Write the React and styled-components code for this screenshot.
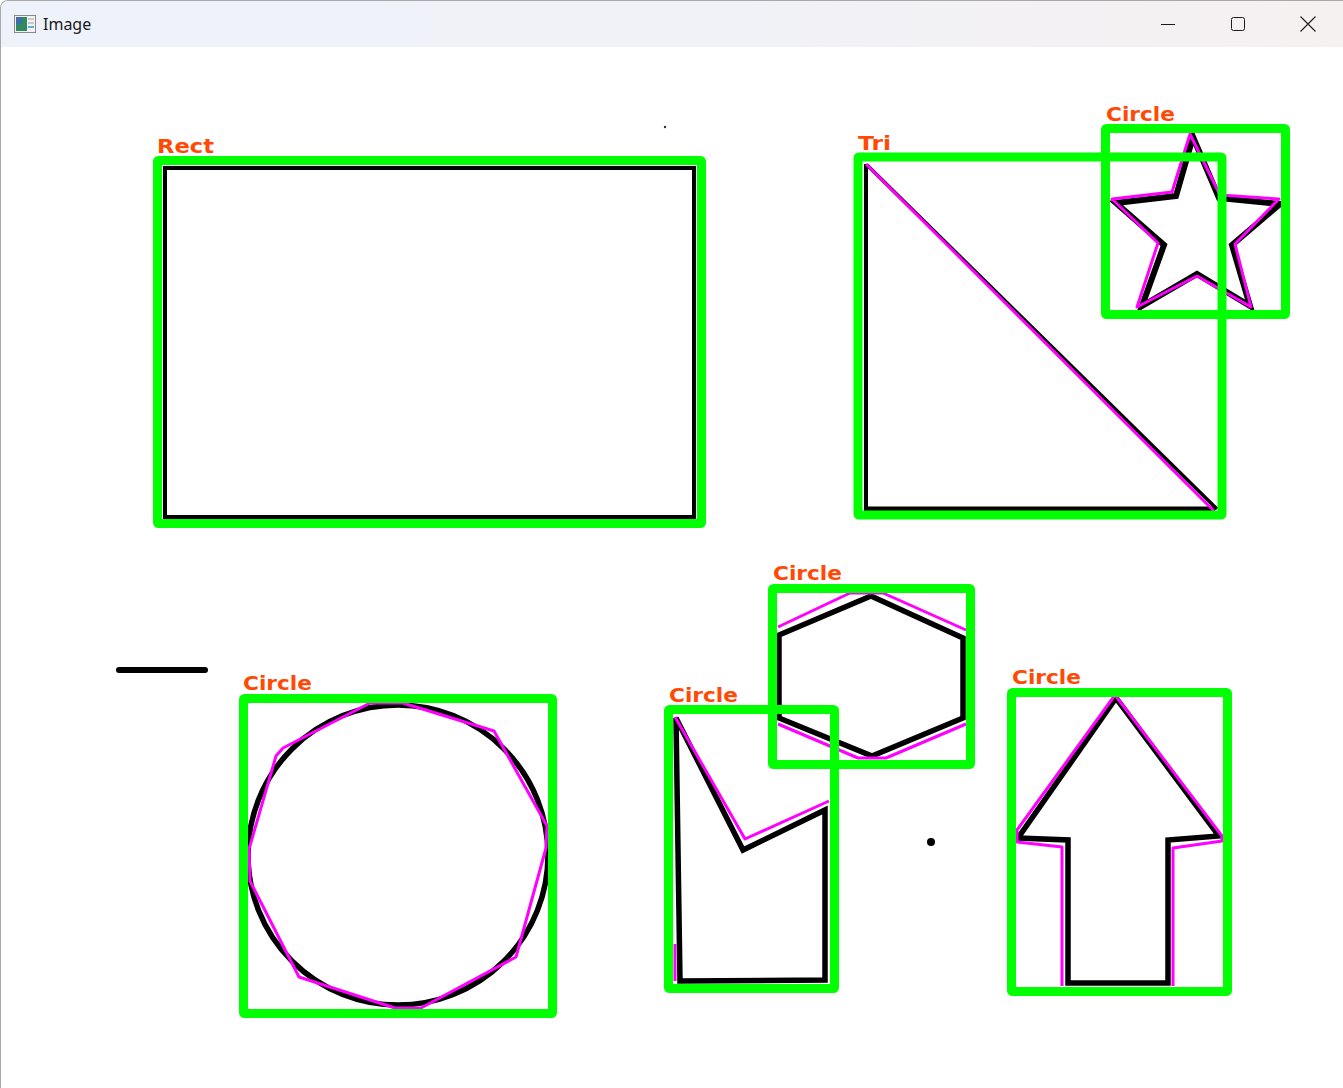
import React from 'react'
import styled, { createGlobalStyle } from 'styled-components'

const GlobalStyle = createGlobalStyle`
  html, body {
    margin: 0;
    padding: 0;
    background: #ffffff;
    overflow: hidden;
  }
`

const Window = styled.div`
  width: 1343px;
  height: 1088px;
  box-sizing: border-box;
  border-top: 1px solid #a9a9ab;
  border-left: 1px solid #a9a9ab;
  border-top-left-radius: 8px;
  display: flex;
  flex-direction: column;
  overflow: hidden;
  background: #ffffff;
`

const TitleBar = styled.div`
  height: 46px;
  flex-shrink: 0;
  display: flex;
  align-items: center;
  padding-left: 13px;
  background: linear-gradient(90deg, #eef2fa 0%, #f1f2f7 55%, #f6f1f1 100%);
`

const Title = styled.span`
  margin-left: 7px;
  font-family: 'Noto Sans', 'Open Sans', sans-serif;
  font-size: 16px;
  color: #1a1a1a;
  line-height: 1;
  padding-bottom: 1px;
`

const Controls = styled.div`
  margin-left: auto;
  display: flex;
  height: 100%;
`

const ControlButton = styled.div`
  width: 70px;
  height: 100%;
  display: flex;
  align-items: center;
  justify-content: center;
  color: #1c1c1c;
`

const Canvas = styled.div`
  flex: 1;
  background: #ffffff;
  display: flex;
`

const Label = styled.text`
  font-family: 'DejaVu Sans', sans-serif;
  font-weight: 700;
  font-size: 19px;
  fill: #ff4a05;
`

const GREEN = '#00ff00'
const MAGENTA = '#ff00ff'

const boxes = [
  { x1: 157.5, y1: 160.5, x2: 701.5, y2: 523.5, label: 'Rect', lx: 157, ly: 153, lw: 57 },
  { x1: 858, y1: 157, x2: 1222, y2: 515, label: 'Tri', lx: 858, ly: 150, lw: 33 },
  { x1: 1105.5, y1: 128.5, x2: 1285.5, y2: 314.5, label: 'Circle', lx: 1106, ly: 121, lw: 69 },
  { x1: 243.5, y1: 698.5, x2: 552.5, y2: 1013.5, label: 'Circle', lx: 243, ly: 690, lw: 69 },
  { x1: 772.5, y1: 588.5, x2: 970.5, y2: 764.5, label: 'Circle', lx: 773, ly: 580, lw: 69 },
  { x1: 668.5, y1: 709.5, x2: 834.5, y2: 988.5, label: 'Circle', lx: 669, ly: 702, lw: 69 },
  { x1: 1011.5, y1: 692.5, x2: 1227.5, y2: 991.5, label: 'Circle', lx: 1012, ly: 684, lw: 69 }
]

const pts = (list) => list.map((p) => p.join(',')).join(' ')

function MinimizeIcon() {
  return (
    <svg width="14" height="14" viewBox="0 0 14 14">
      <line x1="0" y1="7.5" x2="14" y2="7.5" stroke="currentColor" strokeWidth="1" />
    </svg>
  )
}

function MaximizeIcon() {
  return (
    <svg width="14" height="14" viewBox="0 0 14 14">
      <rect x="0.5" y="0.5" width="13" height="13" rx="2" fill="none" stroke="currentColor" strokeWidth="1" />
    </svg>
  )
}

function CloseIcon() {
  return (
    <svg width="16" height="16" viewBox="0 0 16 16">
      <path d="M0.5 0.5 L15.5 15.5 M15.5 0.5 L0.5 15.5" stroke="currentColor" strokeWidth="1.1" />
    </svg>
  )
}

function AppIcon() {
  return (
    <svg width="22" height="18" viewBox="0 0 22 18">
      <rect x="0.5" y="0.5" width="21" height="17" fill="#f2f2f2" stroke="#8a8a8a" />
      <rect x="2" y="2" width="11" height="14" fill="#2f8a5f" />
      <rect x="2" y="2" width="6" height="7" fill="#3c6fa8" />
      <rect x="14" y="3" width="6" height="2" fill="#c9c9c9" />
      <rect x="14" y="7" width="6" height="2" fill="#c9c9c9" />
      <rect x="14" y="11" width="6" height="2" fill="#5fb0d8" />
    </svg>
  )
}

function Drawing() {
  return (
    <svg width="1342" height="1041" viewBox="1 47 1342 1041">
      {/* black source shapes */}
      <g fill="none" stroke="#000" strokeLinejoin="miter">
        <rect x="165" y="168" width="529" height="349" strokeWidth="4" />
        <line x1="165" y1="517.5" x2="694" y2="517.5" strokeWidth="5" />
        <polyline points={pts([[866, 164], [866, 509], [1215, 509]])} strokeWidth="4" />
        <line x1="866" y1="509" x2="1215" y2="509" strokeWidth="5" />
        <line x1="867" y1="165" x2="1217" y2="509" strokeWidth="3.5" />
        <polygon
          points={pts([[1193, 137], [1176, 196], [1116, 203], [1164, 245], [1142, 306], [1197, 274], [1250, 306], [1232, 245], [1280, 204], [1219, 198]])}
          strokeWidth="6"
        />
        <circle cx="398" cy="855" r="150" strokeWidth="5.5" />
        <polygon
          points={pts([[871, 596], [963, 638], [963, 718], [872, 756], [779, 718], [779, 635]])}
          strokeWidth="5.5"
        />
        <polygon
          points={pts([[676, 718], [743, 850], [825, 810], [825, 980], [680, 981]])}
          strokeWidth="5.5"
        />
        <polygon
          points={pts([[1116, 698], [1219, 836], [1168, 840], [1168, 983], [1068, 983], [1068, 840], [1018, 838]])}
          strokeWidth="5.5"
        />
        <line x1="119" y1="670" x2="205" y2="670" strokeWidth="6" strokeLinecap="round" />
      </g>
      <circle cx="931" cy="842" r="4" fill="#000" />
      <circle cx="665" cy="127" r="1.2" fill="#333" />

      {/* magenta approximations */}
      <g fill="none" stroke={MAGENTA} strokeWidth="3" strokeLinejoin="round">
        <line x1="866" y1="164" x2="1214" y2="511" />
        <polygon
          points={pts([[1190, 134], [1172, 192], [1112, 199], [1158, 243], [1137, 307], [1197, 276], [1251, 307], [1235, 244], [1279, 199], [1220, 195]])}
        />
        <polygon
          points={pts([[283, 748], [370, 703], [403, 703], [494, 731], [547, 826], [546, 848], [516, 957], [421, 1008], [395, 1008], [299, 977], [250, 881], [249, 849], [276, 756]])}
        />
        <polyline points={pts([[778, 627], [850, 593], [883, 593], [966, 630]])} />
        <polyline points={pts([[966, 724], [886, 758], [858, 758], [778, 724]])} />
        <polyline points={pts([[675, 717], [745, 839], [829, 801]])} />
        <line x1="675" y1="944" x2="675" y2="981" />
        <polyline
          points={pts([[1062, 986], [1062, 847], [1017, 842], [1017, 830], [1115, 695], [1222, 836], [1222, 841], [1173, 848], [1173, 986]])}
        />
      </g>

      {/* bounding boxes */}
      <g fill="none" stroke={GREEN} strokeWidth="9" strokeLinejoin="round">
        {boxes.map((b, i) => (
          <rect key={`box-${i}`} x={b.x1} y={b.y1} width={b.x2 - b.x1} height={b.y2 - b.y1} rx="1" />
        ))}
      </g>

      {boxes.map((b, i) => (
        <Label key={`label-${i}`} x={b.lx} y={b.ly} textLength={b.lw} lengthAdjust="spacingAndGlyphs">
          {b.label}
        </Label>
      ))}
    </svg>
  )
}

export default function App() {
  return (
    <>
      <GlobalStyle />
      <Window>
        <TitleBar>
          <AppIcon />
          <Title>Image</Title>
          <Controls>
            <ControlButton>
              <MinimizeIcon />
            </ControlButton>
            <ControlButton>
              <MaximizeIcon />
            </ControlButton>
            <ControlButton>
              <CloseIcon />
            </ControlButton>
          </Controls>
        </TitleBar>
        <Canvas>
          <Drawing />
        </Canvas>
      </Window>
    </>
  )
}
